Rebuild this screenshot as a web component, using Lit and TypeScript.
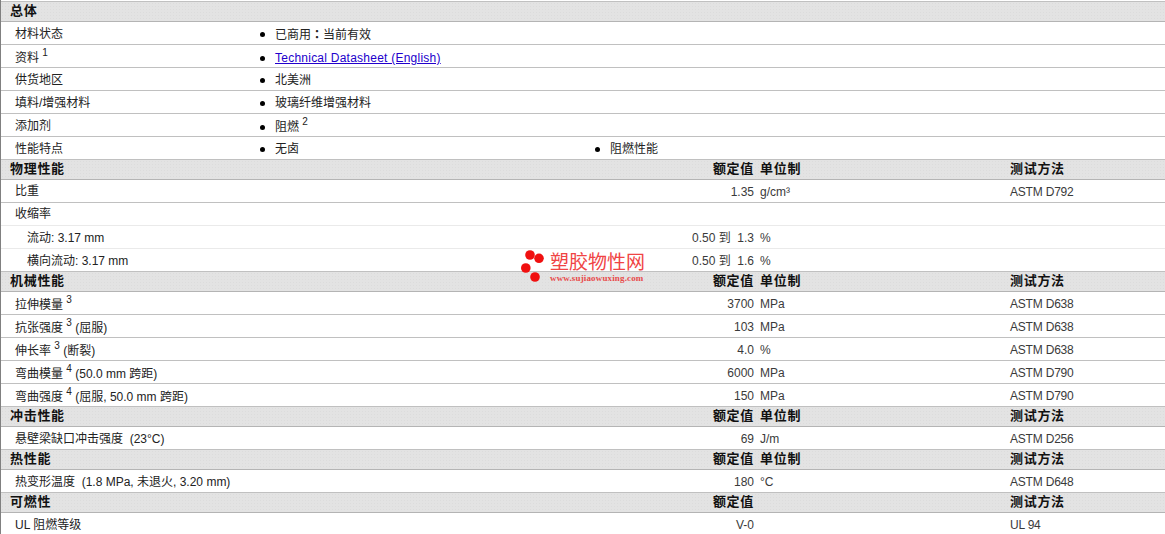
import { LitElement, html, css } from "lit";
import { customElement } from "lit/decorators.js";

type Row =
  | { k: "h"; t: string; v?: string; u?: string; m?: string }
  | { k: "b"; t: any; a: any; b?: any; low?: boolean; lowItem?: boolean }
  | { k: "d"; t: any; v?: string; u?: string; m?: string; sub?: boolean; light?: boolean; low?: boolean; up?: boolean };

const sup = (n: number) => html`<sup class="sup">${n}</sup>`;
const V = "额定值", U = "单位制", M = "测试方法";

const rows: Row[] = [
  { k: "h", t: "总体" },
  { k: "b", t: "材料状态", a: html`已商用<span class="colon">：</span>当前有效` },
  { k: "b", t: html`资料 ${sup(1)}`, a: html`<a href="#">Technical Datasheet (English)</a>`, low: true, lowItem: true },
  { k: "b", t: "供货地区", a: "北美洲" },
  { k: "b", t: "填料/增强材料", a: "玻璃纤维增强材料" },
  { k: "b", t: "添加剂", a: html`阻燃 ${sup(2)}`, lowItem: true },
  { k: "b", t: "性能特点", a: "无卤", b: "阻燃性能" },
  { k: "h", t: "物理性能", v: V, u: U, m: M },
  { k: "d", t: "比重", v: "1.35", u: "g/cm³", m: "ASTM D792", up: true },
  { k: "d", t: "收缩率", light: true, up: true },
  { k: "d", t: "流动: 3.17 mm", v: "0.50 到  1.3", u: "%", sub: true, light: true },
  { k: "d", t: "横向流动: 3.17 mm", v: "0.50 到  1.6", u: "%", sub: true },
  { k: "h", t: "机械性能", v: V, u: U, m: M },
  { k: "d", t: html`拉伸模量 ${sup(3)}`, v: "3700", u: "MPa", m: "ASTM D638", low: true },
  { k: "d", t: html`抗张强度 ${sup(3)} (屈服)`, v: "103", u: "MPa", m: "ASTM D638", low: true },
  { k: "d", t: html`伸长率 ${sup(3)} (断裂)`, v: "4.0", u: "%", m: "ASTM D638", low: true },
  { k: "d", t: html`弯曲模量 ${sup(4)} (50.0 mm 跨距)`, v: "6000", u: "MPa", m: "ASTM D790", low: true },
  { k: "d", t: html`弯曲强度 ${sup(4)} (屈服, 50.0 mm 跨距)`, v: "150", u: "MPa", m: "ASTM D790", low: true },
  { k: "h", t: "冲击性能", v: V, u: U, m: M },
  { k: "d", t: "悬壁梁缺口冲击强度  (23°C)", v: "69", u: "J/m", m: "ASTM D256" },
  { k: "h", t: "热性能", v: V, u: U, m: M },
  { k: "d", t: "热变形温度  (1.8 MPa, 未退火, 3.20 mm)", v: "180", u: "°C", m: "ASTM D648" },
  { k: "h", t: "可燃性", v: V, m: M },
  { k: "d", t: "UL 阻燃等级", v: "V-0", m: "UL 94" },
];

@customElement("app-root")
export class AppRoot extends LitElement {
  static styles = css`
    :host {
      display: block;
      width: 1165px;
      height: 534px;
      overflow: hidden;
      position: relative;
      background: #fff;
      font: 12px/16px "Liberation Sans", "Noto Sans CJK SC", sans-serif;
      color: #3a3a3a;
    }
    .sheet {
      border-left: 1px solid #808080;
      padding-top: 2px;
      box-sizing: border-box;
      height: 534px;
    }
    .row {
      display: grid;
      grid-template-columns: 753px 6px 250px 1fr;
      align-items: center;
      box-sizing: border-box;
      white-space: pre;
    }
    .head {
      background-color: #e3e3e3;
      background-image: radial-gradient(#dcdcdc 0.6px, transparent 0.7px);
      background-size: 3px 3px;
      border-top: 1px solid #c0c0c0;
      border-bottom: 1px solid #b4b4b4;
      font-weight: 700;
      color: #111;
      font-size: 13px;
      letter-spacing: 0.7px;
      margin-top: -1px;
      height: 21px;
      padding-bottom: 2px;
    }
    .head .t { padding-left: 9px; color: #111; }
    .data { height: 23px; border-bottom: 1px solid #c0c0c0; padding-top: 2px; }
    .data.light { border-bottom-color: #eaeaea; }
    .bul {
      display: grid;
      grid-template-columns: 259px 335px 1fr;
      height: 23px;
      padding-top: 2px;
      align-items: center;
      box-sizing: border-box;
      border-bottom: 1px solid #c0c0c0;
      white-space: pre;
    }
    .t { padding-left: 14px; grid-column: 1; grid-row: 1; color: #222; }
    .t.low { padding-top: 2px; }
    .t.up { margin-top: -2px; }
    .sub .t { padding-left: 26px; }
    .v { grid-column: 1; grid-row: 1; text-align: right; }
    .u { grid-column: 3; }
    .m { grid-column: 4; }
    .data .m { letter-spacing: -0.2px; }
    .item { display: flex; align-items: center; gap: 10px; color: #222; }
    .item.low { padding-top: 2px; }
    .dot { width: 5px; height: 5px; border-radius: 50%; background: #000; flex: none; }
    .sup { font-size: 10px; line-height: 0; vertical-align: 6px; }
    .colon { font-family: "Noto Sans CJK TC", sans-serif; font-weight: 700; }
    a { color: #2200cc; letter-spacing: 0.24px; }
    .mark {
      position: absolute;
      left: 520px;
      top: 249px;
      display: flex;
      gap: 4px;
      pointer-events: none;
    }
    .mark svg { display: block; }
    .mark-text { display: flex; flex-direction: column; }
    .mark-cn { font-size: 19px; line-height: 20px; padding-top: 4px; font-weight: 400; color: #f04444; }
    .mark-en { font: 700 9px/9px "Liberation Serif", serif; letter-spacing: 0.15px; color: #e84a4a; margin-top: 1px; }
  `;

  private renderRow(r: Row) {
    if (r.k === "h")
      return html`<div class="row head">
        <span class="t">${r.t}</span><span class="v">${r.v ?? ""}</span>
        <span class="u">${r.u ?? ""}</span><span class="m">${r.m ?? ""}</span>
      </div>`;
    if (r.k === "b")
      return html`<div class="bul">
        <span class="t ${r.low ? "low" : ""}">${r.t}</span>
        <span class="item ${r.lowItem ? "low" : ""}"><i class="dot"></i><span>${r.a}</span></span>
        ${r.b ? html`<span class="item"><i class="dot"></i><span>${r.b}</span></span>` : ""}
      </div>`;
    return html`<div class="row data ${r.sub ? "sub" : ""} ${r.light ? "light" : ""}">
      <span class="t ${r.low ? "low" : ""} ${r.up ? "up" : ""}">${r.t}</span><span class="v">${r.v ?? ""}</span>
      <span class="u">${r.u ?? ""}</span><span class="m">${r.m ?? ""}</span>
    </div>`;
  }

  render() {
    return html`
      <div class="sheet">${rows.map((r) => this.renderRow(r))}</div>
      <div class="mark">
        <svg width="26" height="36" viewBox="0 0 26 36" fill="#f01010">
          <circle cx="10" cy="6" r="4.8"></circle>
          <circle cx="19" cy="9.3" r="4.8"></circle>
          <circle cx="5.8" cy="19" r="4.8"></circle>
          <circle cx="15" cy="28" r="4.8"></circle>
        </svg>
        <div class="mark-text">
          <span class="mark-cn">塑胶物性网</span>
          <span class="mark-en">www.sujiaowuxing.com</span>
        </div>
      </div>
    `;
  }
}
